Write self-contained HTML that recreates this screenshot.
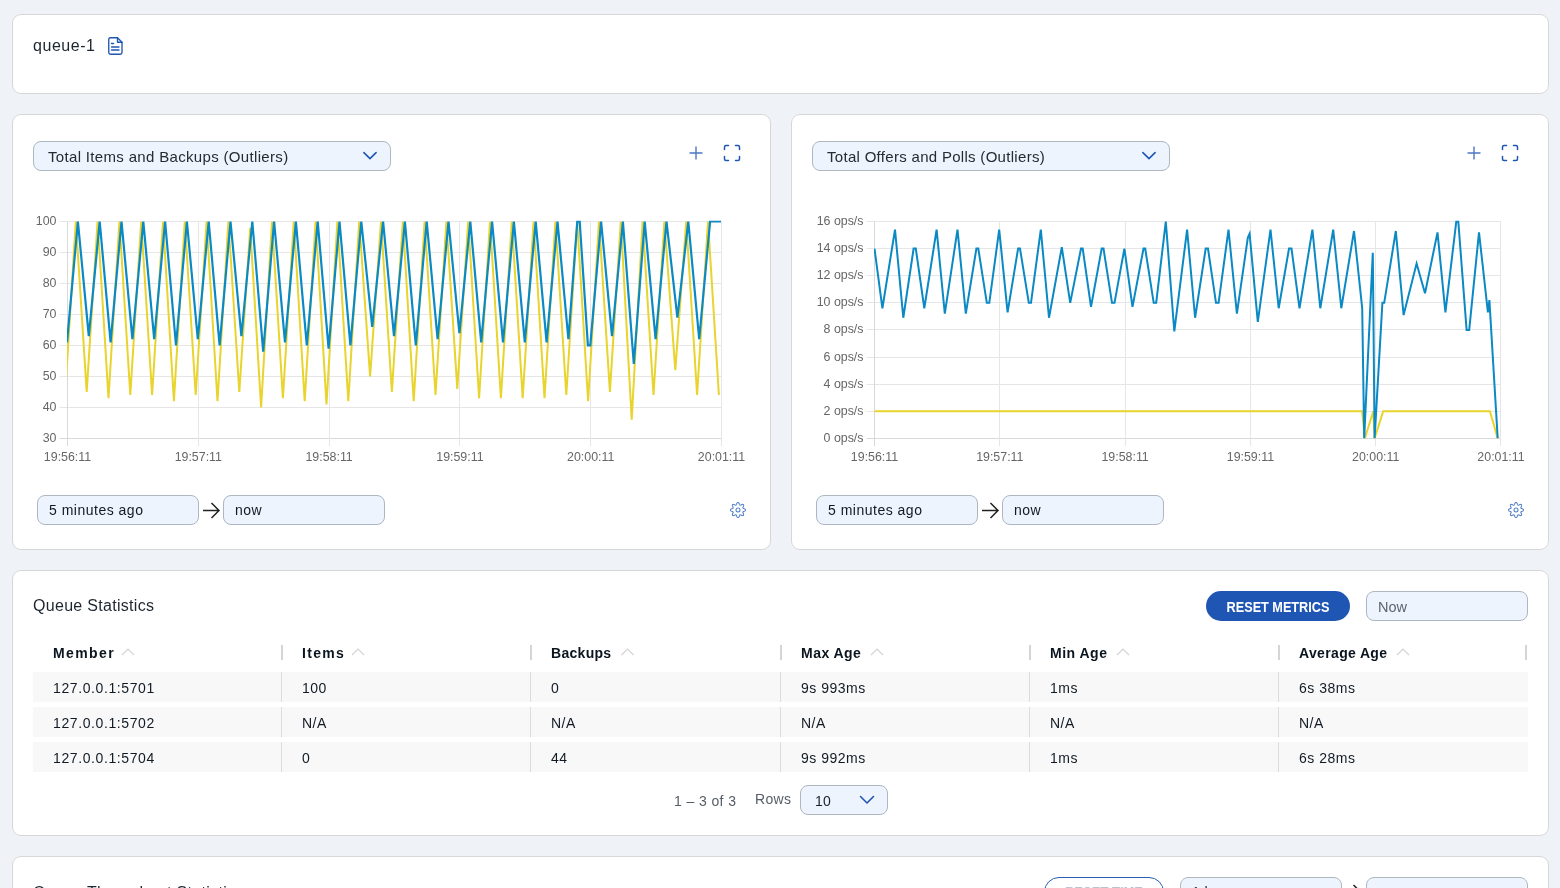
<!DOCTYPE html>
<html><head><meta charset="utf-8">
<style>
*{box-sizing:border-box;margin:0;padding:0}
html,body{width:1560px;height:888px;overflow:hidden;background:#eff2f6;font-family:"Liberation Sans",sans-serif;color:#1b2733}
.card{position:absolute;background:#fff;border:1px solid #d7d7d7;border-radius:9px}
.abs{position:absolute;white-space:nowrap}
.sel{position:absolute;height:30px;background:#edf4fe;border:1px solid #adb7c2;border-radius:8px}
.inp{position:absolute;height:30px;background:#edf4fe;border:1px solid #adb7c2;border-radius:8px}
svg{position:absolute;left:0;top:0;overflow:visible}
.chart text{font-family:"Liberation Sans",sans-serif;font-size:12.4px;fill:#666}
.th{position:absolute;top:644.5px;font-size:14px;font-weight:700;color:#0b1520;letter-spacing:0.35px;white-space:nowrap;line-height:17px}
.td{position:absolute;font-size:14px;color:#121b25;letter-spacing:0.4px;white-space:nowrap;line-height:17px}
.row{position:absolute;left:33px;width:1495px;height:30px;background:#f8f8f8}
.vsep{position:absolute;width:1px;background:#dcdcdc}
.hsep{position:absolute;top:645px;width:2px;height:15px;background:#d5d5d5}
</style></head><body>
<div id="root" style="position:absolute;left:0;top:0;width:1560px;height:888px;overflow:hidden;will-change:transform">

<!-- card 1 -->
<div class="card" style="left:12px;top:14px;width:1537px;height:80px"></div>
<div class="abs" style="left:33px;top:37px;font-size:16px;line-height:18px;letter-spacing:0.55px;color:#1c2630">queue-1</div>

<!-- card 2 & 3 -->
<div class="card" style="left:12px;top:114px;width:759px;height:436px"></div>
<div class="card" style="left:791px;top:114px;width:758px;height:436px"></div>

<div class="sel" style="left:33px;top:141px;width:358px"></div>
<div class="abs" style="left:48px;top:148px;font-size:15px;line-height:17px;letter-spacing:0.33px;color:#262b31">Total Items and Backups (Outliers)</div>
<div class="sel" style="left:812px;top:141px;width:358px"></div>
<div class="abs" style="left:827px;top:148px;font-size:15px;line-height:17px;letter-spacing:0.3px;color:#262b31">Total Offers and Polls (Outliers)</div>

<div class="inp" style="left:37px;top:495px;width:162px"></div>
<div class="abs" style="left:49px;top:502px;font-size:14px;line-height:16px;letter-spacing:0.5px;color:#12191f">5 minutes ago</div>
<div class="inp" style="left:223px;top:495px;width:162px"></div>
<div class="abs" style="left:235px;top:502px;font-size:14px;line-height:16px;letter-spacing:0.45px;color:#12191f">now</div>
<div class="inp" style="left:816px;top:495px;width:162px"></div>
<div class="abs" style="left:828px;top:502px;font-size:14px;line-height:16px;letter-spacing:0.5px;color:#12191f">5 minutes ago</div>
<div class="inp" style="left:1002px;top:495px;width:162px"></div>
<div class="abs" style="left:1014px;top:502px;font-size:14px;line-height:16px;letter-spacing:0.45px;color:#12191f">now</div>

<!-- card 4 -->
<div class="card" style="left:12px;top:570px;width:1537px;height:266px"></div>
<div class="abs" style="left:33px;top:597px;font-size:16px;line-height:18px;letter-spacing:0.3px;color:#1c2630">Queue Statistics</div>
<div class="abs" style="left:1206px;top:591px;width:144px;height:30px;border-radius:15px;background:#1f56b3"></div>
<div class="abs" style="left:1206px;top:599px;width:144px;text-align:center;font-size:14px;line-height:16px;font-weight:700;color:#fff;transform:scaleX(0.905)">RESET METRICS</div>
<div class="inp" style="left:1366px;top:591px;width:162px"></div>
<div class="abs" style="left:1378px;top:599px;font-size:14.5px;line-height:16px;color:#5b6570">Now</div>

<div class="th" style="left:53px;letter-spacing:1.4px">Member</div>
<div class="th" style="left:302px;letter-spacing:1.3px">Items</div>
<div class="th" style="left:551px;letter-spacing:0.3px">Backups</div>
<div class="th" style="left:801px;letter-spacing:0.47px">Max Age</div>
<div class="th" style="left:1050px;letter-spacing:0.5px">Min Age</div>
<div class="th" style="left:1299px;letter-spacing:0.35px">Average Age</div>
<div class="hsep" style="left:281px"></div>
<div class="hsep" style="left:530px"></div>
<div class="hsep" style="left:780px"></div>
<div class="hsep" style="left:1029px"></div>
<div class="hsep" style="left:1278px"></div>
<div class="hsep" style="left:1525px"></div>

<div class="row" style="top:672px"></div>
<div class="row" style="top:707px"></div>
<div class="row" style="top:742px"></div>
<div class="vsep" style="left:281px;top:672px;height:30px"></div>
<div class="vsep" style="left:530px;top:672px;height:30px"></div>
<div class="vsep" style="left:780px;top:672px;height:30px"></div>
<div class="vsep" style="left:1029px;top:672px;height:30px"></div>
<div class="vsep" style="left:1278px;top:672px;height:30px"></div>
<div class="vsep" style="left:281px;top:707px;height:30px"></div>
<div class="vsep" style="left:530px;top:707px;height:30px"></div>
<div class="vsep" style="left:780px;top:707px;height:30px"></div>
<div class="vsep" style="left:1029px;top:707px;height:30px"></div>
<div class="vsep" style="left:1278px;top:707px;height:30px"></div>
<div class="vsep" style="left:281px;top:742px;height:30px"></div>
<div class="vsep" style="left:530px;top:742px;height:30px"></div>
<div class="vsep" style="left:780px;top:742px;height:30px"></div>
<div class="vsep" style="left:1029px;top:742px;height:30px"></div>
<div class="vsep" style="left:1278px;top:742px;height:30px"></div>
<div class="td" style="left:53px;top:680px;letter-spacing:0.6px">127.0.0.1:5701</div>
<div class="td" style="left:302px;top:680px;letter-spacing:0.5px">100</div>
<div class="td" style="left:551px;top:680px;letter-spacing:0.5px">0</div>
<div class="td" style="left:801px;top:680px;letter-spacing:0.5px">9s 993ms</div>
<div class="td" style="left:1050px;top:680px;letter-spacing:0.5px">1ms</div>
<div class="td" style="left:1299px;top:680px;letter-spacing:0.5px">6s 38ms</div>
<div class="td" style="left:53px;top:715px;letter-spacing:0.6px">127.0.0.1:5702</div>
<div class="td" style="left:302px;top:715px;letter-spacing:0.5px">N/A</div>
<div class="td" style="left:551px;top:715px;letter-spacing:0.5px">N/A</div>
<div class="td" style="left:801px;top:715px;letter-spacing:0.5px">N/A</div>
<div class="td" style="left:1050px;top:715px;letter-spacing:0.5px">N/A</div>
<div class="td" style="left:1299px;top:715px;letter-spacing:0.5px">N/A</div>
<div class="td" style="left:53px;top:750px;letter-spacing:0.6px">127.0.0.1:5704</div>
<div class="td" style="left:302px;top:750px;letter-spacing:0.5px">0</div>
<div class="td" style="left:551px;top:750px;letter-spacing:0.5px">44</div>
<div class="td" style="left:801px;top:750px;letter-spacing:0.5px">9s 992ms</div>
<div class="td" style="left:1050px;top:750px;letter-spacing:0.5px">1ms</div>
<div class="td" style="left:1299px;top:750px;letter-spacing:0.5px">6s 28ms</div>

<div class="abs" style="left:674px;top:792.5px;font-size:14px;line-height:17px;letter-spacing:0.4px;color:#555d66">1 – 3 of 3</div>
<div class="abs" style="left:755px;top:790.5px;font-size:14px;line-height:17px;letter-spacing:0.35px;color:#555d66">Rows</div>
<div class="inp" style="left:800px;top:785px;width:88px"></div>
<div class="abs" style="left:815px;top:793px;font-size:14px;line-height:17px;letter-spacing:0.3px;color:#1a222b">10</div>

<!-- card 5 -->
<div class="card" style="left:12px;top:856px;width:1537px;height:200px"></div>
<div class="abs" style="left:33px;top:883.5px;font-size:16px;line-height:18px;letter-spacing:0.3px;color:#1c2630">Queue Throughput Statistics</div>
<div class="abs" style="left:1044px;top:877px;width:120px;height:30px;border-radius:15px;border:1.5px solid #2a5db5;background:#fff"></div>
<div class="abs" style="left:1044px;top:884px;width:120px;text-align:center;font-size:13px;line-height:16px;font-weight:700;color:#b9c3cf">RESET TIME</div>
<div class="inp" style="left:1180px;top:877px;width:162px"></div>
<div class="abs" style="left:1192px;top:884px;font-size:14px;line-height:16px;letter-spacing:0.45px;color:#1a222b">1 hour ago</div>
<div class="inp" style="left:1366px;top:877px;width:162px"></div>

<svg width="1560" height="888" viewBox="0 0 1560 888">
<defs>
<clipPath id="clipL"><rect x="67" y="220.5" width="655" height="218"/></clipPath>
<clipPath id="clipR"><rect x="874" y="220.5" width="628" height="218"/></clipPath>
</defs>
<g class="chart">
<line x1="59.5" y1="221.5" x2="721.5" y2="221.5" stroke="#e6e6e6" stroke-width="1"/>
<text x="56.5" y="225.0" text-anchor="end">100</text>
<line x1="59.5" y1="252.5" x2="721.5" y2="252.5" stroke="#e6e6e6" stroke-width="1"/>
<text x="56.5" y="256.0" text-anchor="end">90</text>
<line x1="59.5" y1="283.5" x2="721.5" y2="283.5" stroke="#e6e6e6" stroke-width="1"/>
<text x="56.5" y="287.0" text-anchor="end">80</text>
<line x1="59.5" y1="314.5" x2="721.5" y2="314.5" stroke="#e6e6e6" stroke-width="1"/>
<text x="56.5" y="318.0" text-anchor="end">70</text>
<line x1="59.5" y1="345.5" x2="721.5" y2="345.5" stroke="#e6e6e6" stroke-width="1"/>
<text x="56.5" y="349.0" text-anchor="end">60</text>
<line x1="59.5" y1="376.5" x2="721.5" y2="376.5" stroke="#e6e6e6" stroke-width="1"/>
<text x="56.5" y="380.0" text-anchor="end">50</text>
<line x1="59.5" y1="407.5" x2="721.5" y2="407.5" stroke="#e6e6e6" stroke-width="1"/>
<text x="56.5" y="411.0" text-anchor="end">40</text>
<line x1="59.5" y1="438.5" x2="721.5" y2="438.5" stroke="#d9d9d9" stroke-width="1"/>
<text x="56.5" y="442.0" text-anchor="end">30</text>
<line x1="67.5" y1="221.5" x2="67.5" y2="446" stroke="#d9d9d9" stroke-width="1"/>
<text x="67.5" y="461" text-anchor="middle">19:56:11</text>
<line x1="198.5" y1="221.5" x2="198.5" y2="446" stroke="#e6e6e6" stroke-width="1"/>
<text x="198.3" y="461" text-anchor="middle">19:57:11</text>
<line x1="329.5" y1="221.5" x2="329.5" y2="446" stroke="#e6e6e6" stroke-width="1"/>
<text x="329.1" y="461" text-anchor="middle">19:58:11</text>
<line x1="459.5" y1="221.5" x2="459.5" y2="446" stroke="#e6e6e6" stroke-width="1"/>
<text x="459.9" y="461" text-anchor="middle">19:59:11</text>
<line x1="590.5" y1="221.5" x2="590.5" y2="446" stroke="#e6e6e6" stroke-width="1"/>
<text x="590.7" y="461" text-anchor="middle">20:00:11</text>
<line x1="721.5" y1="221.5" x2="721.5" y2="446" stroke="#e6e6e6" stroke-width="1"/>
<text x="721.5" y="461" text-anchor="middle">20:01:11</text>
<g clip-path="url(#clipL)"><path d="M64.90,398.12 L75.80,221.50 L86.70,391.92 L97.60,221.50 L108.50,398.12 L119.40,221.50 L130.30,395.02 L141.20,221.50 L152.10,395.02 L163.00,221.50 L173.90,401.22 L184.80,221.50 L195.70,395.02 L206.60,221.50 L217.50,401.22 L228.40,221.50 L239.30,391.92 L250.20,227.70 L261.10,407.41 L272.00,221.50 L282.90,398.12 L293.80,221.50 L304.70,401.22 L315.60,221.50 L326.50,404.32 L337.40,221.50 L348.30,401.22 L359.20,221.50 L370.10,376.43 L381.00,221.50 L391.90,391.92 L402.80,221.50 L413.70,401.22 L424.60,221.50 L435.50,395.02 L446.40,221.50 L457.30,388.82 L468.20,221.50 L479.10,398.12 L490.00,221.50 L500.90,398.12 L511.80,221.50 L522.70,398.12 L533.60,221.50 L544.50,398.12 L555.40,221.50 L566.30,395.02 L577.20,221.50 L588.10,401.22 L599.00,221.50 L609.90,391.92 L620.80,221.50 L631.70,419.81 L642.60,221.50 L653.50,395.02 L664.40,221.50 L675.30,370.23 L686.20,221.50 L697.10,395.02 L708.00,221.50 L718.90,395.02" fill="none" stroke="#e8d42c" stroke-width="2" stroke-linejoin="miter"/>
<path d="M67.00,342.34 L77.90,221.50 L88.80,336.15 L99.70,221.50 L110.60,342.34 L121.50,221.50 L132.40,339.25 L143.30,221.50 L154.20,339.25 L165.10,221.50 L176.00,345.44 L186.90,221.50 L197.80,339.25 L208.70,221.50 L219.60,345.44 L230.50,221.50 L241.40,336.15 L252.30,221.50 L263.20,351.64 L274.10,221.50 L285.00,342.34 L295.90,221.50 L306.80,345.44 L317.70,221.50 L328.60,348.54 L339.50,221.50 L350.40,345.44 L361.30,221.50 L372.20,326.85 L383.10,221.50 L394.00,336.15 L404.90,221.50 L415.80,345.44 L426.70,221.50 L437.60,339.25 L448.50,221.50 L459.40,333.05 L470.30,221.50 L481.20,342.34 L492.10,221.50 L503.00,342.34 L513.90,221.50 L524.80,342.34 L535.70,221.50 L546.60,342.34 L557.50,221.50 L568.40,339.25 L577.30,221.50 L579.70,221.50 L587.90,345.44 L590.30,345.44 L601.10,221.50 L612.00,336.15 L622.90,221.50 L633.80,364.03 L644.70,221.50 L655.60,339.25 L666.50,221.50 L677.40,317.56 L688.30,221.50 L699.20,339.25 L710.10,221.50 L721.00,221.50" fill="none" stroke="#0a89c4" stroke-width="2.2" stroke-linejoin="miter"/></g>
</g>
<g class="chart">
<line x1="866.5" y1="221.5" x2="1501" y2="221.5" stroke="#e6e6e6" stroke-width="1"/>
<text x="863.5" y="225.0" text-anchor="end">16 ops/s</text>
<line x1="866.5" y1="248.5" x2="1501" y2="248.5" stroke="#e6e6e6" stroke-width="1"/>
<text x="863.5" y="252.0" text-anchor="end">14 ops/s</text>
<line x1="866.5" y1="275.5" x2="1501" y2="275.5" stroke="#e6e6e6" stroke-width="1"/>
<text x="863.5" y="279.0" text-anchor="end">12 ops/s</text>
<line x1="866.5" y1="302.5" x2="1501" y2="302.5" stroke="#e6e6e6" stroke-width="1"/>
<text x="863.5" y="306.0" text-anchor="end">10 ops/s</text>
<line x1="866.5" y1="329.5" x2="1501" y2="329.5" stroke="#e6e6e6" stroke-width="1"/>
<text x="863.5" y="333.0" text-anchor="end">8 ops/s</text>
<line x1="866.5" y1="357.5" x2="1501" y2="357.5" stroke="#e6e6e6" stroke-width="1"/>
<text x="863.5" y="361.0" text-anchor="end">6 ops/s</text>
<line x1="866.5" y1="384.5" x2="1501" y2="384.5" stroke="#e6e6e6" stroke-width="1"/>
<text x="863.5" y="388.0" text-anchor="end">4 ops/s</text>
<line x1="866.5" y1="411.5" x2="1501" y2="411.5" stroke="#e6e6e6" stroke-width="1"/>
<text x="863.5" y="415.0" text-anchor="end">2 ops/s</text>
<line x1="866.5" y1="438.5" x2="1501" y2="438.5" stroke="#d9d9d9" stroke-width="1"/>
<text x="863.5" y="442.0" text-anchor="end">0 ops/s</text>
<line x1="874.5" y1="221.5" x2="874.5" y2="446" stroke="#d9d9d9" stroke-width="1"/>
<text x="874.5" y="461" text-anchor="middle">19:56:11</text>
<line x1="999.5" y1="221.5" x2="999.5" y2="446" stroke="#e6e6e6" stroke-width="1"/>
<text x="999.8" y="461" text-anchor="middle">19:57:11</text>
<line x1="1125.5" y1="221.5" x2="1125.5" y2="446" stroke="#e6e6e6" stroke-width="1"/>
<text x="1125.1" y="461" text-anchor="middle">19:58:11</text>
<line x1="1250.5" y1="221.5" x2="1250.5" y2="446" stroke="#e6e6e6" stroke-width="1"/>
<text x="1250.4" y="461" text-anchor="middle">19:59:11</text>
<line x1="1375.5" y1="221.5" x2="1375.5" y2="446" stroke="#e6e6e6" stroke-width="1"/>
<text x="1375.7" y="461" text-anchor="middle">20:00:11</text>
<line x1="1500.5" y1="221.5" x2="1500.5" y2="446" stroke="#e6e6e6" stroke-width="1"/>
<text x="1501.0" y="461" text-anchor="middle">20:01:11</text>
<g clip-path="url(#clipR)"><path d="M874.50,411.29 L1362.20,411.29 L1364.80,438.40 L1373.30,411.29 L1374.60,438.40 L1383.20,411.29 L1489.90,411.29 L1497.70,438.40" fill="none" stroke="#e8d42c" stroke-width="2"/>
<path d="M874.50,248.61 L882.40,308.26 L895.00,229.63 L903.30,317.75 L913.60,248.61 L915.80,248.61 L924.30,308.26 L936.60,229.63 L944.80,313.68 L957.50,229.63 L965.80,313.68 L976.40,248.61 L978.30,248.61 L986.80,302.84 L989.30,302.84 L999.20,229.63 L1007.60,312.33 L1018.10,248.61 L1020.00,248.61 L1028.80,302.84 L1031.00,302.84 L1040.80,229.63 L1049.00,317.75 L1061.80,247.26 L1070.20,302.84 L1081.00,248.61 L1082.70,248.61 L1091.00,306.90 L1101.70,248.61 L1103.50,248.61 L1112.00,302.84 L1114.50,302.84 L1124.40,248.61 L1132.50,306.90 L1143.50,248.61 L1145.20,248.61 L1153.70,302.84 L1156.20,302.84 L1165.80,221.50 L1174.30,331.31 L1187.10,229.63 L1195.10,317.75 L1205.70,248.61 L1208.00,248.61 L1216.00,302.84 L1218.60,302.84 L1228.50,229.63 L1236.90,313.68 L1247.80,237.77 L1249.60,233.70 L1257.80,321.82 L1270.50,229.63 L1278.70,308.26 L1289.00,248.61 L1291.50,248.61 L1299.50,308.26 L1312.40,229.63 L1320.30,308.26 L1333.20,229.63 L1341.30,308.26 L1354.00,230.99 L1362.20,308.26 L1364.20,438.40 L1372.80,252.68 L1374.60,438.40 L1382.40,302.84 L1384.20,302.84 L1395.80,230.99 L1403.60,315.04 L1416.60,263.52 L1425.00,293.35 L1437.50,232.34 L1445.40,312.33 L1456.30,221.50 L1458.30,221.50 L1466.60,329.95 L1469.20,329.95 L1479.00,232.34 L1487.90,312.33 L1489.40,300.13 L1497.70,438.40" fill="none" stroke="#0a89c4" stroke-width="2"/></g>
</g>
<!-- doc icon -->
<g fill="none" stroke="#1f56b3" stroke-width="1.35" stroke-linejoin="round" stroke-linecap="round">
<path d="M110.5,37.75 H117.5 L122,42.25 V52.5 Q122,54.25 120.25,54.25 H110.5 Q108.75,54.25 108.75,52.5 V39.5 Q108.75,37.75 110.5,37.75 Z"/>
<path d="M117.5,37.75 V42.25 H122"/>
<path d="M111.5,43.5 H113.5 M111.5,47 H119 M111.5,50 H119"/>
</g>
<!-- plus icons -->
<g stroke="#4b78c0" stroke-width="1.4" fill="none">
<path d="M696,146.5 V159.5 M689.5,153 H702.5"/>
<path d="M1474,146.5 V159.5 M1467.5,153 H1480.5"/>
</g>
<!-- fullscreen icons -->
<g stroke="#1f56b3" stroke-width="1.5" fill="none" stroke-linecap="round">
<path d="M724.5,149.5 V147 Q724.5,145.5 726,145.5 H728.5 M735.5,145.5 H738 Q739.5,145.5 739.5,147 V149.5 M739.5,156.5 V159 Q739.5,160.5 738,160.5 H735.5 M728.5,160.5 H726 Q724.5,160.5 724.5,159 V156.5"/>
<path d="M1502.5,149.5 V147 Q1502.5,145.5 1504,145.5 H1506.5 M1513.5,145.5 H1516 Q1517.5,145.5 1517.5,147 V149.5 M1517.5,156.5 V159 Q1517.5,160.5 1516,160.5 H1513.5 M1506.5,160.5 H1504 Q1502.5,160.5 1502.5,159 V156.5"/>
</g>
<!-- select chevrons -->
<g stroke="#1f56b3" stroke-width="1.6" fill="none" stroke-linecap="round" stroke-linejoin="round">
<path d="M363.9,152.6 L370,158.6 L376.1,152.6"/>
<path d="M1142.9,152.6 L1149,158.6 L1155.1,152.6"/>
<path d="M860.5,796.5 L867,803 L873.5,796.5"/>
</g>
<!-- arrows -->
<g stroke="#222" stroke-width="1.5" fill="none">
<path d="M203,510.5 H218 M211.5,503 L219,510.5 L211.5,518"/>
<path d="M982,510.5 H997 M990.5,503 L998,510.5 L990.5,518"/>
<path d="M1345,892.5 H1360 M1353.5,885 L1361,892.5 L1353.5,900"/>
</g>
<!-- sort chevrons -->
<g stroke="#d4d4d4" stroke-width="1.1" fill="none">
<path d="M122,655 L128,649 L134,655"/>
<path d="M352,655 L358,649 L364,655"/>
<path d="M621.5,655 L627.5,649 L633.5,655"/>
<path d="M871,655 L877,649 L883,655"/>
<path d="M1117,655 L1123,649 L1129,655"/>
<path d="M1397,655 L1403,649 L1409,655"/>
</g>
<!-- gear icons -->
<g fill="none" stroke="#5582c9" stroke-width="1.05" stroke-linejoin="round"><path d="M738.00,502.45L738.29,502.50L738.58,502.65L738.84,502.90L739.07,503.23L739.25,503.72L739.39,504.21L739.53,504.56L739.68,504.84L739.83,505.03L740.01,505.15L740.22,505.19L740.46,505.16L740.76,505.07L741.11,504.93L741.56,504.68L742.03,504.46L742.43,504.38L742.79,504.40L743.09,504.49L743.34,504.66L743.51,504.91L743.60,505.21L743.62,505.57L743.54,505.97L743.32,506.44L743.07,506.89L742.93,507.24L742.84,507.54L742.81,507.78L742.85,507.99L742.97,508.17L743.16,508.32L743.44,508.47L743.79,508.61L744.28,508.75L744.77,508.93L745.10,509.16L745.35,509.42L745.50,509.71L745.55,510.00L745.50,510.29L745.35,510.58L745.10,510.84L744.77,511.07L744.28,511.25L743.79,511.39L743.44,511.53L743.16,511.68L742.97,511.83L742.85,512.01L742.81,512.22L742.84,512.46L742.93,512.76L743.07,513.11L743.32,513.56L743.54,514.03L743.62,514.43L743.60,514.79L743.51,515.09L743.34,515.34L743.09,515.51L742.79,515.60L742.43,515.62L742.03,515.54L741.56,515.32L741.11,515.07L740.76,514.93L740.46,514.84L740.22,514.81L740.01,514.85L739.83,514.97L739.68,515.16L739.53,515.44L739.39,515.79L739.25,516.28L739.07,516.77L738.84,517.10L738.58,517.35L738.29,517.50L738.00,517.55L737.71,517.50L737.42,517.35L737.16,517.10L736.93,516.77L736.75,516.28L736.61,515.79L736.47,515.44L736.32,515.16L736.17,514.97L735.99,514.85L735.78,514.81L735.54,514.84L735.24,514.93L734.89,515.07L734.44,515.32L733.97,515.54L733.57,515.62L733.21,515.60L732.91,515.51L732.66,515.34L732.49,515.09L732.40,514.79L732.38,514.43L732.46,514.03L732.68,513.56L732.93,513.11L733.07,512.76L733.16,512.46L733.19,512.22L733.15,512.01L733.03,511.83L732.84,511.68L732.56,511.53L732.21,511.39L731.72,511.25L731.23,511.07L730.90,510.84L730.65,510.58L730.50,510.29L730.45,510.00L730.50,509.71L730.65,509.42L730.90,509.16L731.23,508.93L731.72,508.75L732.21,508.61L732.56,508.47L732.84,508.32L733.03,508.17L733.15,507.99L733.19,507.78L733.16,507.54L733.07,507.24L732.93,506.89L732.68,506.44L732.46,505.97L732.38,505.57L732.40,505.21L732.49,504.91L732.66,504.66L732.91,504.49L733.21,504.40L733.57,504.38L733.97,504.46L734.44,504.68L734.89,504.93L735.24,505.07L735.54,505.16L735.78,505.19L735.99,505.15L736.17,505.03L736.32,504.84L736.47,504.56L736.61,504.21L736.75,503.72L736.93,503.23L737.16,502.90L737.42,502.65L737.71,502.50L738.00,502.45Z"/><circle cx="738" cy="510" r="2.0"/></g><g fill="none" stroke="#5582c9" stroke-width="1.05" stroke-linejoin="round"><path d="M1516.00,502.45L1516.29,502.50L1516.58,502.65L1516.84,502.90L1517.07,503.23L1517.25,503.72L1517.39,504.21L1517.53,504.56L1517.68,504.84L1517.83,505.03L1518.01,505.15L1518.22,505.19L1518.46,505.16L1518.76,505.07L1519.11,504.93L1519.56,504.68L1520.03,504.46L1520.43,504.38L1520.79,504.40L1521.09,504.49L1521.34,504.66L1521.51,504.91L1521.60,505.21L1521.62,505.57L1521.54,505.97L1521.32,506.44L1521.07,506.89L1520.93,507.24L1520.84,507.54L1520.81,507.78L1520.85,507.99L1520.97,508.17L1521.16,508.32L1521.44,508.47L1521.79,508.61L1522.28,508.75L1522.77,508.93L1523.10,509.16L1523.35,509.42L1523.50,509.71L1523.55,510.00L1523.50,510.29L1523.35,510.58L1523.10,510.84L1522.77,511.07L1522.28,511.25L1521.79,511.39L1521.44,511.53L1521.16,511.68L1520.97,511.83L1520.85,512.01L1520.81,512.22L1520.84,512.46L1520.93,512.76L1521.07,513.11L1521.32,513.56L1521.54,514.03L1521.62,514.43L1521.60,514.79L1521.51,515.09L1521.34,515.34L1521.09,515.51L1520.79,515.60L1520.43,515.62L1520.03,515.54L1519.56,515.32L1519.11,515.07L1518.76,514.93L1518.46,514.84L1518.22,514.81L1518.01,514.85L1517.83,514.97L1517.68,515.16L1517.53,515.44L1517.39,515.79L1517.25,516.28L1517.07,516.77L1516.84,517.10L1516.58,517.35L1516.29,517.50L1516.00,517.55L1515.71,517.50L1515.42,517.35L1515.16,517.10L1514.93,516.77L1514.75,516.28L1514.61,515.79L1514.47,515.44L1514.32,515.16L1514.17,514.97L1513.99,514.85L1513.78,514.81L1513.54,514.84L1513.24,514.93L1512.89,515.07L1512.44,515.32L1511.97,515.54L1511.57,515.62L1511.21,515.60L1510.91,515.51L1510.66,515.34L1510.49,515.09L1510.40,514.79L1510.38,514.43L1510.46,514.03L1510.68,513.56L1510.93,513.11L1511.07,512.76L1511.16,512.46L1511.19,512.22L1511.15,512.01L1511.03,511.83L1510.84,511.68L1510.56,511.53L1510.21,511.39L1509.72,511.25L1509.23,511.07L1508.90,510.84L1508.65,510.58L1508.50,510.29L1508.45,510.00L1508.50,509.71L1508.65,509.42L1508.90,509.16L1509.23,508.93L1509.72,508.75L1510.21,508.61L1510.56,508.47L1510.84,508.32L1511.03,508.17L1511.15,507.99L1511.19,507.78L1511.16,507.54L1511.07,507.24L1510.93,506.89L1510.68,506.44L1510.46,505.97L1510.38,505.57L1510.40,505.21L1510.49,504.91L1510.66,504.66L1510.91,504.49L1511.21,504.40L1511.57,504.38L1511.97,504.46L1512.44,504.68L1512.89,504.93L1513.24,505.07L1513.54,505.16L1513.78,505.19L1513.99,505.15L1514.17,505.03L1514.32,504.84L1514.47,504.56L1514.61,504.21L1514.75,503.72L1514.93,503.23L1515.16,502.90L1515.42,502.65L1515.71,502.50L1516.00,502.45Z"/><circle cx="1516" cy="510" r="2.0"/></g>
</svg>
</div>
</body></html>
